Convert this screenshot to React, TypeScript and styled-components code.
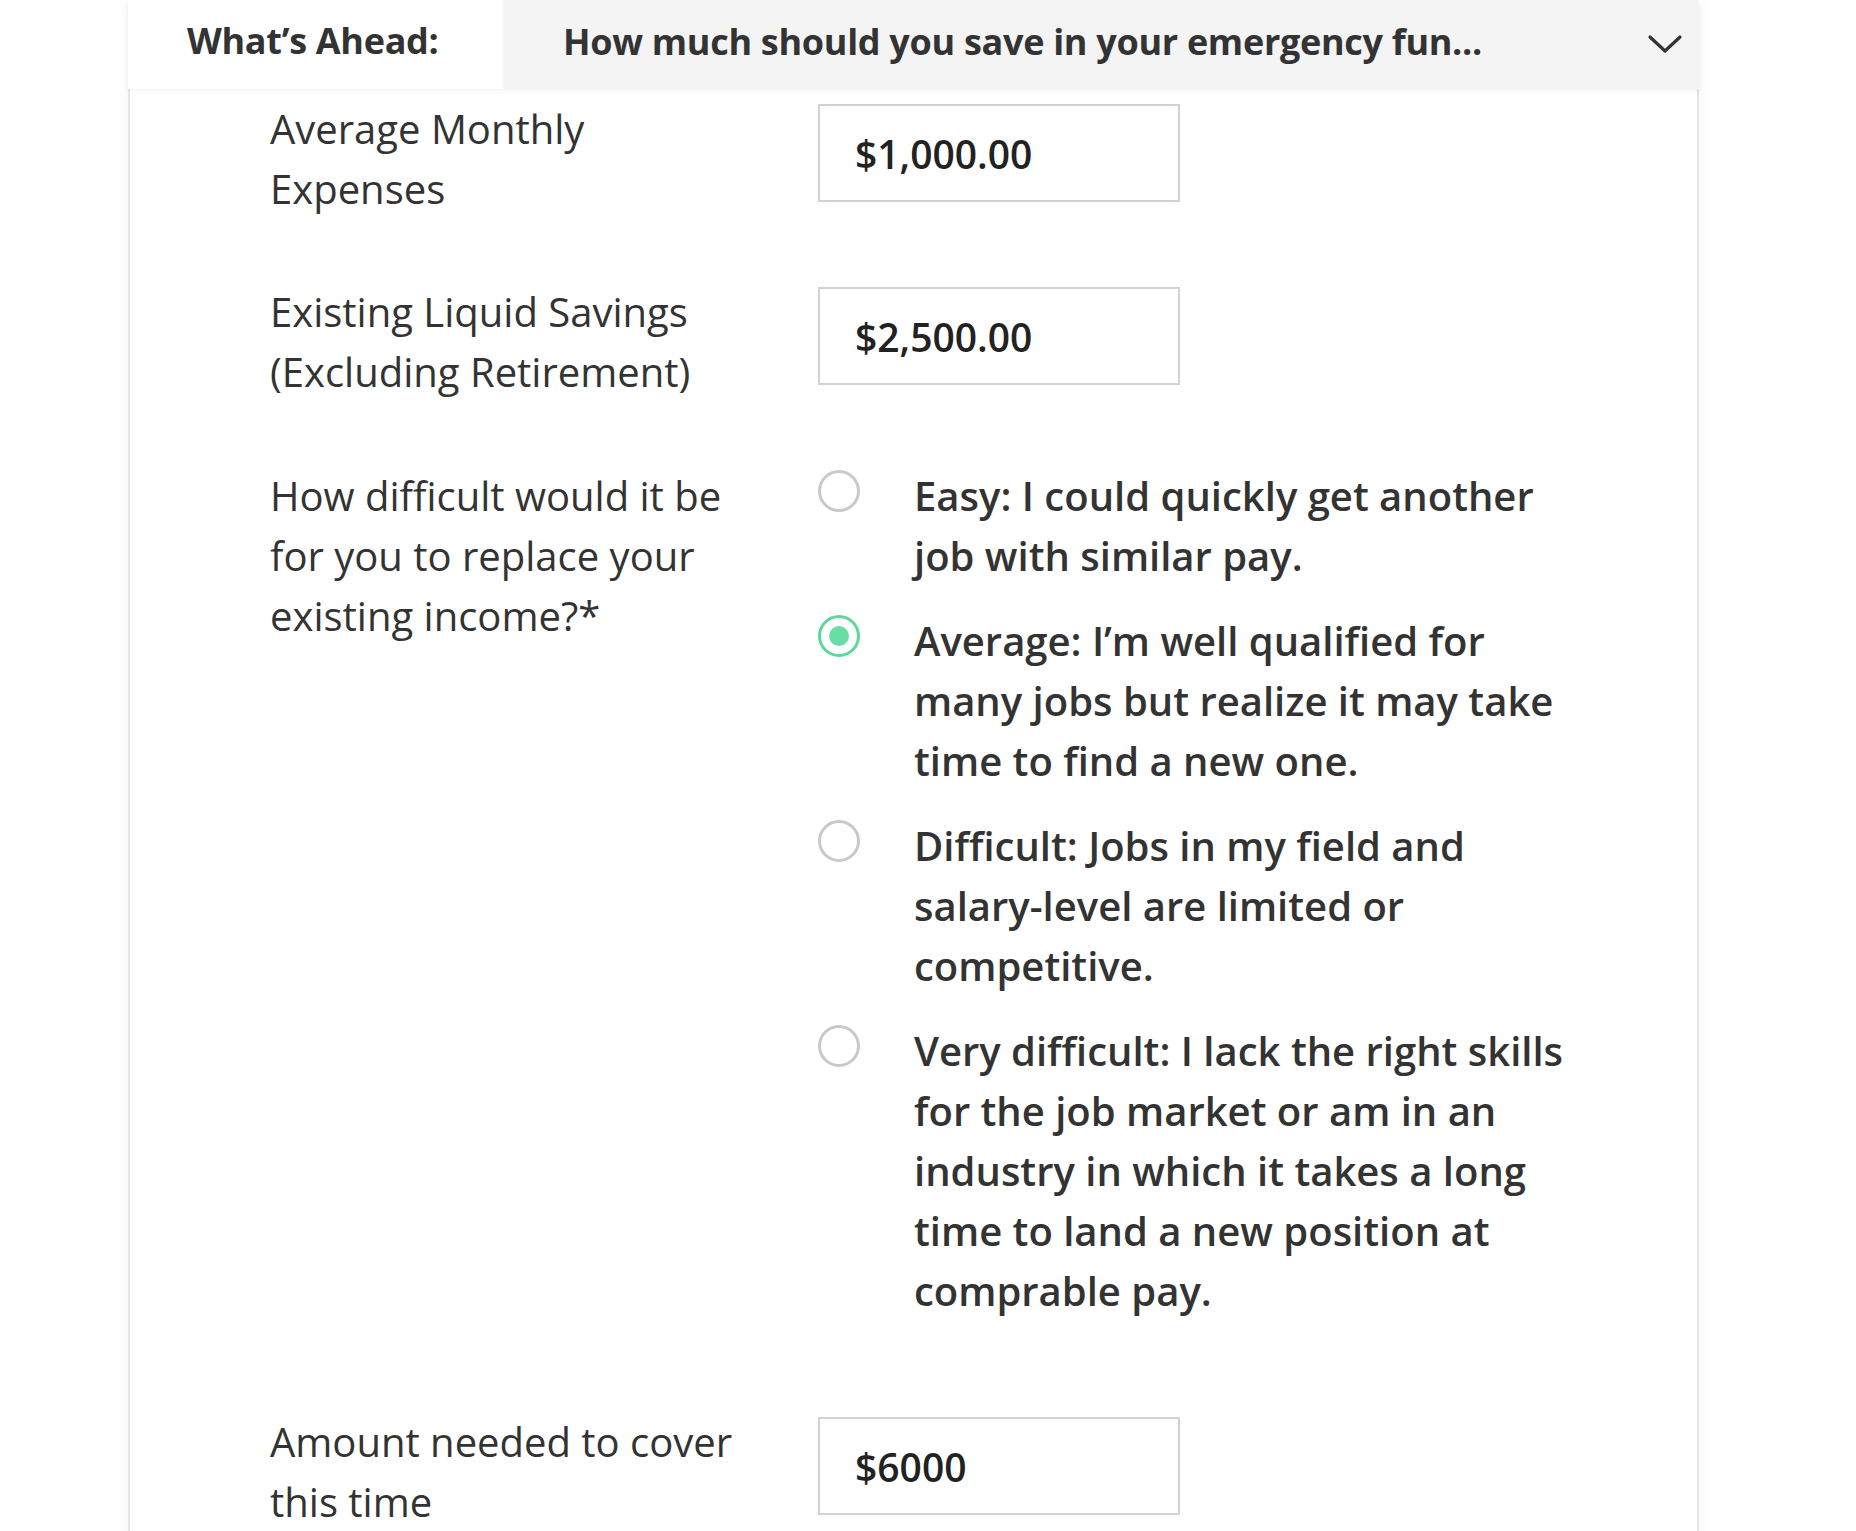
import React, { useState } from 'react';
import styled, { createGlobalStyle } from 'styled-components';

const GlobalStyle = createGlobalStyle`
  body {
    margin: 0;
    background: #ffffff;
    font-family: 'Open Sans', 'Noto Sans', sans-serif;
    color: #333333;
  }
`;

const Card = styled.div`
  margin-left: 128px;
  width: 1571px;
  min-height: 1531px;
  box-sizing: border-box;
  background: #ffffff;
  border-left: 2px solid #e6e6e6;
  border-right: 2px solid #e6e6e6;
  box-shadow: 0 0 14px rgba(0, 0, 0, 0.05);
`;

const Header = styled.div`
  display: flex;
  height: 89px;
  margin: 0 -2px;
  background: #f4f4f4;
  box-shadow: 0 3px 5px rgba(0, 0, 0, 0.04);
  position: relative;
  z-index: 1;
`;

const Tab = styled.div`
  width: 375px;
  box-sizing: border-box;
  padding: 0 0 8px 59px;
  display: flex;
  align-items: center;
  background: #ffffff;
  font-size: 36px;
  font-weight: 700;
  color: #333333;
  letter-spacing: -0.3px;
`;

const Question = styled.div`
  flex: 1;
  display: flex;
  align-items: center;
  justify-content: space-between;
  padding: 0 16px 6px 60px;
  font-size: 36px;
  font-weight: 700;
  color: #333333;
  letter-spacing: -0.3px;
`;

const Chevron = styled.svg`
  width: 36px;
  height: 24px;
  margin-top: 4px;
`;

const Body = styled.div`
  padding: 10px 0 40px 140px;
`;

const Row = styled.div<{ gap: number }>`
  display: grid;
  grid-template-columns: 548px 1fr;
  align-items: start;
  margin-top: ${(p) => p.gap}px;
`;

const Label = styled.div`
  width: 470px;
  font-size: 40px;
  line-height: 60px;
  font-weight: 400;
  color: #333333;
`;

const AmountInput = styled.input`
  width: 362px;
  height: 98px;
  margin-top: 5px;
  box-sizing: border-box;
  border: 2px solid #cfd3d8;
  border-radius: 0;
  padding: 0 0 0 35px;
  font-family: inherit;
  font-size: 39px;
  font-weight: 600;
  color: #222222;
  background: #ffffff;
  outline: none;
`;

const RadioGroup = styled.div`
  display: flex;
  flex-direction: column;
  gap: 25px;
  padding-bottom: 26px;
`;

const Option = styled.label`
  display: flex;
  align-items: flex-start;
  gap: 54px;
  cursor: pointer;
`;

const RadioDot = styled.span<{ checked: boolean }>`
  flex-shrink: 0;
  width: 42px;
  height: 42px;
  margin-top: 4px;
  box-sizing: border-box;
  border-radius: 50%;
  border: 3px solid ${(p) => (p.checked ? '#5bd99b' : '#c9c9c9')};
  display: flex;
  align-items: center;
  justify-content: center;

  &::after {
    content: '';
    width: 20px;
    height: 20px;
    border-radius: 50%;
    background: #68dea5;
    display: ${(p) => (p.checked ? 'block' : 'none')};
  }
`;

const OptionText = styled.span`
  width: 658px;
  font-size: 40px;
  line-height: 60px;
  font-weight: 600;
  color: #333333;
`;

const options = [
  { id: 'easy', text: 'Easy: I could quickly get another job with similar pay.' },
  {
    id: 'average',
    text: 'Average: I\u2019m well qualified for many jobs but realize it may take time to find a new one.',
  },
  {
    id: 'difficult',
    text: 'Difficult: Jobs in my field and salary-level are limited or competitive.',
  },
  {
    id: 'very',
    text: 'Very difficult: I lack the right skills for the job market or am in an industry in which it takes a long time to land a new position at comprable pay.',
  },
];

export default function App() {
  const [choice, setChoice] = useState('average');

  return (
    <>
      <GlobalStyle />
      <Card>
        <Header>
          <Tab>What&rsquo;s Ahead:</Tab>
          <Question>
            <span>How much should you save in your emergency fun...</span>
            <Chevron viewBox="0 0 36 24" fill="none">
              <path d="M3 5 L18 19 L33 5" stroke="#333" strokeWidth="3.2" strokeLinecap="round" strokeLinejoin="round" />
            </Chevron>
          </Question>
        </Header>

        <Body>
          <Row gap={0}>
            <Label>Average Monthly Expenses</Label>
            <AmountInput readOnly value="$1,000.00" />
          </Row>

          <Row gap={63}>
            <Label>Existing Liquid Savings (Excluding Retirement)</Label>
            <AmountInput readOnly value="$2,500.00" />
          </Row>

          <Row gap={64}>
            <Label>How difficult would it be for you to replace your existing income?*</Label>
            <RadioGroup>
              {options.map((o) => (
                <Option key={o.id} onClick={() => setChoice(o.id)}>
                  <RadioDot checked={choice === o.id} />
                  <OptionText>{o.text}</OptionText>
                </Option>
              ))}
            </RadioGroup>
          </Row>

          <Row gap={65}>
            <Label>Amount needed to cover this time</Label>
            <AmountInput readOnly value="$6000" />
          </Row>
        </Body>
      </Card>
    </>
  );
}
